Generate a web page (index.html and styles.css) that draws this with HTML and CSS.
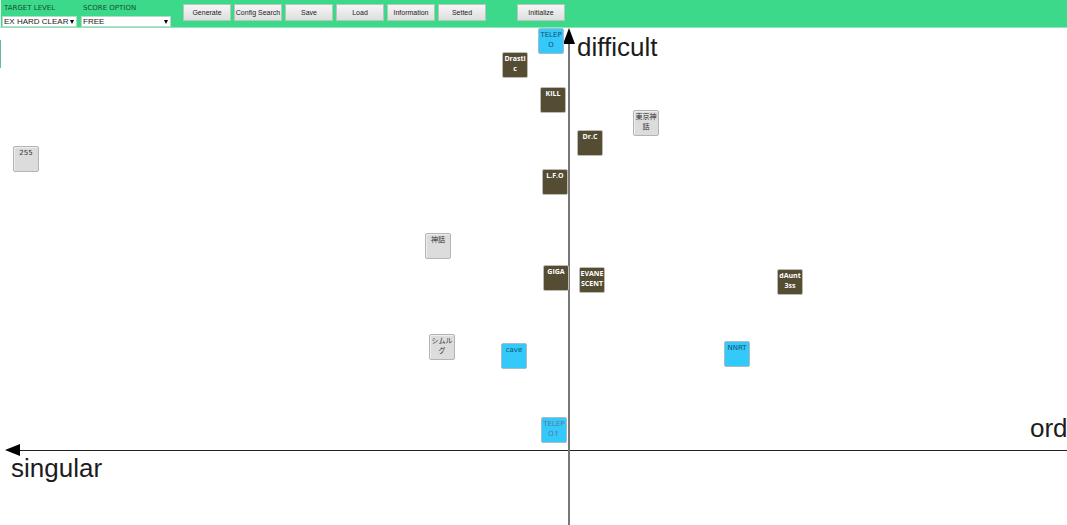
FILE: index.html
```html
<!DOCTYPE html>
<html lang="en">
<head>
<meta charset="utf-8">
<title>Difficulty map</title>
<link rel="stylesheet" href="styles.css">
</head>
<body>
<header class="toolbar">
  <div class="field field-level">
    <label for="level">TARGET LEVEL</label>
    <div class="picker">
      <select id="level"><option>EX HARD CLEAR</option></select>
      <svg class="caret" viewBox="0 0 5 5" aria-hidden="true"><path d="M0 0h5L2.500 5z"/></svg>
    </div>
  </div>
  <div class="field field-option">
    <label for="option">SCORE OPTION</label>
    <div class="picker">
      <select id="option"><option>FREE</option></select>
      <svg class="caret" viewBox="0 0 5 5" aria-hidden="true"><path d="M0 0h5L2.500 5z"/></svg>
    </div>
  </div>
  <div class="actions">
    <button type="button">Generate</button>
    <button type="button">Config Search</button>
    <button type="button">Save</button>
    <button type="button">Load</button>
    <button type="button">Information</button>
    <button type="button">Setted</button>
    <button type="button" class="initialize">Initialize</button>
  </div>
</header>
<main class="map">
  <div class="edge-tab"></div>
  <div class="axis-x"></div>
  <div class="axis-y"></div>
  <svg class="arrow-left" viewBox="0 0 15 12" aria-hidden="true"><path d="M0 6L15 0v12z"/></svg>
  <svg class="arrow-up" viewBox="0 0 12 16" aria-hidden="true"><path d="M6 0l6 16H0z"/></svg>
  <span class="axis-name difficult">difficult</span>
  <span class="axis-name singular">singular</span>
  <span class="axis-name order">ord</span>

  <div class="tile blue telepo">TELEP<br>O</div>
  <div class="tile dark drastic">Drasti<br>c</div>
  <div class="tile dark kill">KILL</div>
  <div class="tile dark drc">Dr.C</div>
  <div class="tile gray tokyo">東京神<br>話</div>
  <div class="tile gray n255">255</div>
  <div class="tile dark lfo">L.F.O</div>
  <div class="tile gray shinwa">神話</div>
  <div class="tile dark giga">GIGA</div>
  <div class="tile dark evanescent">EVANE<br>SCENT</div>
  <div class="tile dark daunt">dAunt<br>3ss</div>
  <div class="tile gray simurgh">シムル<br>グ</div>
  <div class="tile blue cave">cave</div>
  <div class="tile blue nnrt">NNRT</div>
  <div class="tile blue rose telepo-up">TELEP<br>O↑</div>
</main>
</body>
</html>
```

FILE: styles.css
```css
* { box-sizing: border-box; }

body {
  margin: 0;
  min-height: 100vh;
  display: flex;
  flex-direction: column;
  background: #fff;
  font-family: "Liberation Sans", Arial, sans-serif;
  overflow: hidden;
}

.toolbar {
  display: flex;
  align-items: flex-start;
  gap: 4px;
  height: 28px;
  padding: 3px 0 0 1px;
  background: #3dd98a;
  border-left: 1px solid #e4f7ed;
  border-bottom: 1px solid #8ee5b9;
}

.field { display: flex; flex-direction: column; }
.field-level { width: 75px; }
.field-option { width: 90px; }

.field label {
  padding-left: 2px;
  font: 7px/10px "DejaVu Sans", sans-serif;
  height: 13px;
  color: #12512f;
  white-space: nowrap;
}

.picker { display: grid; align-items: center; }

.picker select {
  grid-area: 1 / 1;
  appearance: none;
  width: 100%;
  height: 11px;
  margin: 0;
  padding: 0 0 0 1px;
  border: 1px solid #b9d8c8;
  border-radius: 0;
  background: #fff;
  color: #222;
  font: 8px/9px "Liberation Sans", Arial, sans-serif;
}

.caret {
  grid-area: 1 / 1;
  justify-self: end;
  width: 4px;
  height: 4px;
  margin-right: 3px;
  pointer-events: none;
}

.actions { display: flex; gap: 3px; padding: 1px 0 0 8px; }

.actions button {
  width: 48px;
  height: 17px;
  padding: 0;
  border: 1px solid #b5c6bd;
  border-radius: 0;
  background: linear-gradient(#f6f6f6, #dedede);
  color: #222;
  font: 7px/14px "Liberation Sans", Arial, sans-serif;
  white-space: nowrap;
}

.actions .initialize { margin-left: 28px; }

.map { position: relative; flex: 1; overflow: hidden; }

.edge-tab { position: absolute; left: 0; top: 12px; width: 1px; height: 28px; background: #62bb98; }
.axis-x { position: absolute; left: 18px; right: 0; top: 422px; height: 1px; background: #222; }
.axis-y { position: absolute; left: 568px; top: 12px; bottom: 0; width: 2px; background: #777; }
.arrow-left { position: absolute; left: 5px; top: 416px; width: 15px; height: 12px; }
.arrow-up { position: absolute; left: 563px; top: 0; width: 12px; height: 16px; }

.axis-name {
  position: absolute;
  font-size: 26px;
  line-height: 30px;
  color: #1c1c1c;
  white-space: nowrap;
}
.difficult { left: 577px; top: 4px; }
.singular { left: 11px; top: 425px; }
.order { left: 1030px; top: 385px; }

.tile {
  position: absolute;
  display: flow-root;
  width: 26px;
  height: 26px;
  padding-top: 1px;
  border: 1px solid #b4b4b4;
  border-radius: 2px;
  font: 7px/10px "DejaVu Sans", "Noto Sans CJK JP", sans-serif;
  text-align: center;
  white-space: nowrap;
  box-shadow: inset 1px 1px #eee;
}
.gray { background: #dcdcdc; color: #333; }
.blue { background: #33c9fb; border-color: #a9bcc4; color: #17526b; box-shadow: none; }
.rose { color: #66739b; }
.dark {
  background: #544c33;
  border-color: #bcbcb4;
  color: #fff;
  font-family: "Open Sans", sans-serif;
  font-weight: 700;
  box-shadow: none;
}

.telepo { left: 538px; top: 0; }
.drastic { left: 502px; top: 24px; }
.kill { left: 540px; top: 59px; }
.drc { left: 577px; top: 102px; }
.tokyo { left: 633px; top: 82px; }
.n255 { left: 13px; top: 118px; }
.lfo { left: 542px; top: 141px; }
.shinwa { left: 425px; top: 205px; }
.giga { left: 543px; top: 237px; }
.evanescent { left: 579px; top: 239px; }
.daunt { left: 777px; top: 241px; }
.simurgh { left: 429px; top: 306px; }
.cave { left: 501px; top: 315px; }
.nnrt { left: 724px; top: 313px; }
.telepo-up { left: 541px; top: 389px; }
```
